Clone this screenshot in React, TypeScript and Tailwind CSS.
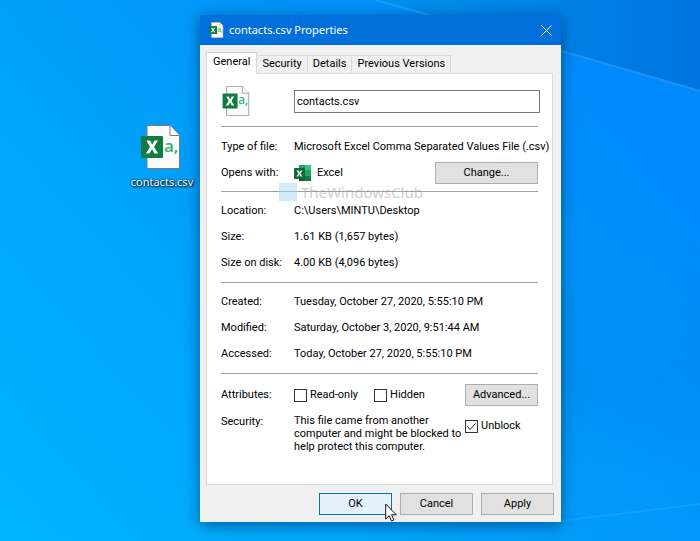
import React from 'react';
import { clsx } from 'clsx';

interface InfoRow {
  label: string;
  value: string;
}

const TABS = ['General', 'Security', 'Details', 'Previous Versions'];

const SIZE_ROWS: InfoRow[] = [
  { label: 'Location:', value: 'C:\\Users\\MINTU\\Desktop' },
  { label: 'Size:', value: '1.61 KB (1,657 bytes)' },
  { label: 'Size on disk:', value: '4.00 KB (4,096 bytes)' },
];

const DATE_ROWS: InfoRow[] = [
  { label: 'Created:', value: 'Tuesday, October 27, 2020, 5:55:10 PM' },
  { label: 'Modified:', value: 'Saturday, October 3, 2020, 9:51:44 AM' },
  { label: 'Accessed:', value: 'Today, October 27, 2020, 5:55:10 PM' },
];

const CsvIcon: React.FC<{ className?: string }> = ({ className }) => (
  <svg viewBox="0 0 40 44" className={className} aria-hidden="true">
    <path d="M7 .5H30L39.500 10.500V43.500H7Z" fill="#fbfbfb" stroke="#7b7b7b" />
    <path d="M30 .5V10.500H39.500" fill="#fff" stroke="#7b7b7b" />
    <rect x="1" y="11" width="22" height="22" rx="1" fill="#107c41" />
    <path d="M6.500 15.500H10.200L12.200 19.800L14.500 15.500H17.900L14.100 22L18.100 28.500H14.400L12 24L9.500 28.500H5.900L10 22Z" fill="#fff" />
    <text x="24" y="27" fontSize="17" fontWeight="600" fill="#33b679" fontFamily="Open Sans, sans-serif">a,</text>
  </svg>
);

const ExcelIcon = () => (
  <svg viewBox="0 0 18 18" className="h-[18px] w-[18px]" aria-hidden="true">
    <path d="M5 1h6v5H5z" fill="#21a366" />
    <path d="M11 1h6v5h-6z" fill="#33c481" />
    <path d="M5 6h6v6H5z" fill="#107c41" />
    <path d="M11 6h6v6h-6z" fill="#21a366" />
    <path d="M5 12h12v5H5z" fill="#185c37" />
    <path d="M11 12h6v5h-6z" fill="#107c41" />
    <rect x="0" y="4" width="11" height="11" rx="1" fill="#0d6b38" />
    <path d="M2.500 6.500H4.400L5.500 8.600L6.700 6.500H8.400L6.500 9.500L8.500 12.500H6.600L5.400 10.300L4.200 12.500H2.400L4.500 9.500Z" fill="#fff" />
  </svg>
);

const Wallpaper = () => (
  <svg viewBox="0 0 700 541" preserveAspectRatio="none" className="absolute inset-0 h-full w-full" aria-hidden="true">
    <defs>
      <linearGradient id="sky" x1="0" y1="1" x2="1" y2="0.300">
        <stop offset="0" stopColor="#00b4ff" />
        <stop offset="0.350" stopColor="#00a6fb" />
        <stop offset="0.700" stopColor="#0096f8" />
        <stop offset="1" stopColor="#0089fb" />
      </linearGradient>
      <linearGradient id="shade" x1="0" y1="0" x2="1" y2="0">
        <stop offset="0" stopColor="#0092ee" />
        <stop offset="1" stopColor="#0074e0" />
      </linearGradient>
      <linearGradient id="dim" x1="0" y1="0" x2="0" y2="1">
        <stop offset="0" stopColor="#0078e0" stopOpacity="0" />
        <stop offset="0.600" stopColor="#0078e0" stopOpacity="0.200" />
        <stop offset="1" stopColor="#0078e0" stopOpacity="0" />
      </linearGradient>
    </defs>
    <rect width="700" height="541" fill="url(#sky)" />
    <rect x="560" y="230" width="140" height="250" fill="url(#dim)" />
    <path d="M375 0H700V92L565 53Z" fill="url(#shade)" />
    <path d="M375 0L565 52L700 91" fill="none" stroke="#2ba6ff" strokeWidth="2" opacity="0.600" />
    <path d="M560 521L700 504" fill="none" stroke="#2ba6ff" strokeWidth="2" opacity="0.500" />
  </svg>
);

const Watermark = () => (
  <div className="pointer-events-none absolute left-[72px] top-[109px] flex items-center gap-1 opacity-50">
    <svg viewBox="0 0 18 18" className="h-[18px] w-[18px]" aria-hidden="true">
      <rect width="18" height="18" fill="#a5d8f5" />
      <path d="M2 6h14M2 10h14M2 14h14M6 2v14M10 2v14M14 2v14" stroke="#b5dff7" />
    </svg>
    <span className="font-['Noto_Sans'] text-[15px] leading-[16px] text-[#a0a0a0]">TheWindowsClub</span>
  </div>
);

const DialogButton: React.FC<{ children: React.ReactNode; className?: string; primary?: boolean }> = ({
  children,
  className,
  primary,
}) => (
  <button
    type="button"
    className={clsx(
      'h-[22px] border text-center',
      primary ? 'border-[#0078a8] bg-[#e5f1fb]' : 'border-[#adadad] bg-[#e1e1e1]',
      className
    )}
  >
    {children}
  </button>
);

const CheckField: React.FC<{ label: string; checked?: boolean }> = ({ label, checked }) => (
  <label className="flex items-center gap-[3px]">
    <span className="relative flex h-[13px] w-[13px]">
      <input
        type="checkbox"
        defaultChecked={checked}
        className="peer h-[13px] w-[13px] appearance-none border border-[#333] bg-white"
      />
      <svg viewBox="0 0 13 13" className="pointer-events-none absolute inset-0 hidden peer-checked:block" aria-hidden="true">
        <path d="M2.500 6.500L5 9.500L10.500 3.500" fill="none" stroke="#222" />
      </svg>
    </span>
    {label}
  </label>
);

const InfoList: React.FC<{ rows: InfoRow[] }> = ({ rows }) => (
  <dl className="grid grid-cols-[73px_1fr] gap-y-3 border-b border-[#a0a0a0] pb-3 pt-3 leading-[14px]">
    {rows.map((row) => (
      <React.Fragment key={row.label}>
        <dt>{row.label}</dt>
        <dd>{row.value}</dd>
      </React.Fragment>
    ))}
  </dl>
);

const PropertiesDialog = () => (
  <section
    role="dialog"
    aria-label="contacts.csv Properties"
    className="absolute left-[200px] top-[15px] w-[361px] bg-[#f0f0f0] pb-[7px] shadow-[0_3px_14px_rgba(0,40,90,0.6)]"
  >
    <header className="flex h-[30px] items-center bg-[#006fd9] pl-2 pr-[5px] text-white">
      <CsvIcon className="h-4 w-4" />
      <h1 className="ml-[5px] flex-1 font-['Noto_Sans'] text-[11px]">contacts.csv Properties</h1>
      <button type="button" aria-label="Close" className="p-1">
        <svg viewBox="0 0 11 11" className="h-[11px] w-[11px]">
          <path d="M.5 .5L10.500 10.500M10.500 .5L.5 10.500" stroke="#fff" />
        </svg>
      </button>
    </header>

    <div className="pl-[6px] pr-[7px] pt-[7px]">
      <div role="tablist" className="flex items-end">
        {TABS.map((tab, i) => (
          <button
            key={tab}
            type="button"
            role="tab"
            aria-selected={i === 0}
            className={clsx(
              'border-t border-r border-[#d9d9d9]',
              i === 0 ? 'relative z-10 -mb-px h-[22px] border-l bg-white px-[6px] pb-[3px]' : 'h-[18px] bg-[#f0f0f0] px-[5px]'
            )}
          >
            {tab}
          </button>
        ))}
      </div>

      <div className="relative mr-px h-[412px] border border-[#d9d9d9] bg-white px-[14px] pt-3">
        <div className="flex items-center border-b border-[#a0a0a0] pb-[10px]">
          <CsvIcon className="mr-[44px] h-[30px] w-[29px]" />
          <input
            type="text"
            aria-label="File name"
            defaultValue="contacts.csv"
            className="-mr-[2px] h-[23px] min-w-0 flex-1 border border-[#7a7a7a] bg-white px-[2px] outline-none"
          />
        </div>

        <div className="border-b border-[#a0a0a0] pb-[7px] pt-[13px]">
          <div className="grid grid-cols-[73px_1fr] leading-[14px]">
            <span>Type of file:</span>
            <span className="whitespace-nowrap">Microsoft Excel Comma Separated Values File (.csv)</span>
          </div>
          <div className="mt-2 flex items-center">
            <span className="w-[73px]">Opens with:</span>
            <ExcelIcon />
            <span className="ml-[5px] flex-1">Excel</span>
            <DialogButton className="w-[103px]">Change...</DialogButton>
          </div>
        </div>

        <InfoList rows={SIZE_ROWS} />
        <InfoList rows={DATE_ROWS} />

        <div className="flex items-center pt-[10px]">
          <span className="w-[73px]">Attributes:</span>
          <CheckField label="Read-only" />
          <div className="ml-4 flex-1">
            <CheckField label="Hidden" />
          </div>
          <DialogButton className="w-[73px]">Advanced...</DialogButton>
        </div>

        <div className="flex items-start pt-2">
          <span className="w-[73px]">Security:</span>
          <p className="w-[171px] leading-[13px]">
            This file came from another computer and might be blocked to help protect this computer.
          </p>
          <div className="pt-1">
            <CheckField label="Unblock" checked />
          </div>
        </div>

        <Watermark />
      </div>

      <footer className="flex justify-end gap-2 pt-2">
        <DialogButton primary className="w-[73px]">OK</DialogButton>
        <DialogButton className="w-[73px]">Cancel</DialogButton>
        <DialogButton className="w-[73px]">Apply</DialogButton>
      </footer>
    </div>
  </section>
);

const Cursor = () => (
  <svg viewBox="0 0 12 19" className="absolute left-[385px] top-[503px] h-[19px] w-3" aria-hidden="true">
    <path d="M.7 1V16L4.200 12.700L6.500 18L8.900 17L6.600 11.800H11.300Z" fill="#fff" stroke="#111" />
  </svg>
);

const App: React.FC = () => (
  <main className="relative min-h-screen overflow-hidden font-[Roboto,sans-serif] text-[11px] text-black">
    <Wallpaper />
    <figure className="absolute left-[130px] top-[125px] w-16">
      <CsvIcon className="ml-[10px] h-11 w-10" />
      <figcaption className="mt-[6px] text-center font-['Noto_Sans'] text-[11px] leading-[14px] text-white [text-shadow:1px_1px_2px_#000,0_0_2px_#000]">
        contacts.csv
      </figcaption>
    </figure>
    <PropertiesDialog />
    <Cursor />
  </main>
);

export default App;
